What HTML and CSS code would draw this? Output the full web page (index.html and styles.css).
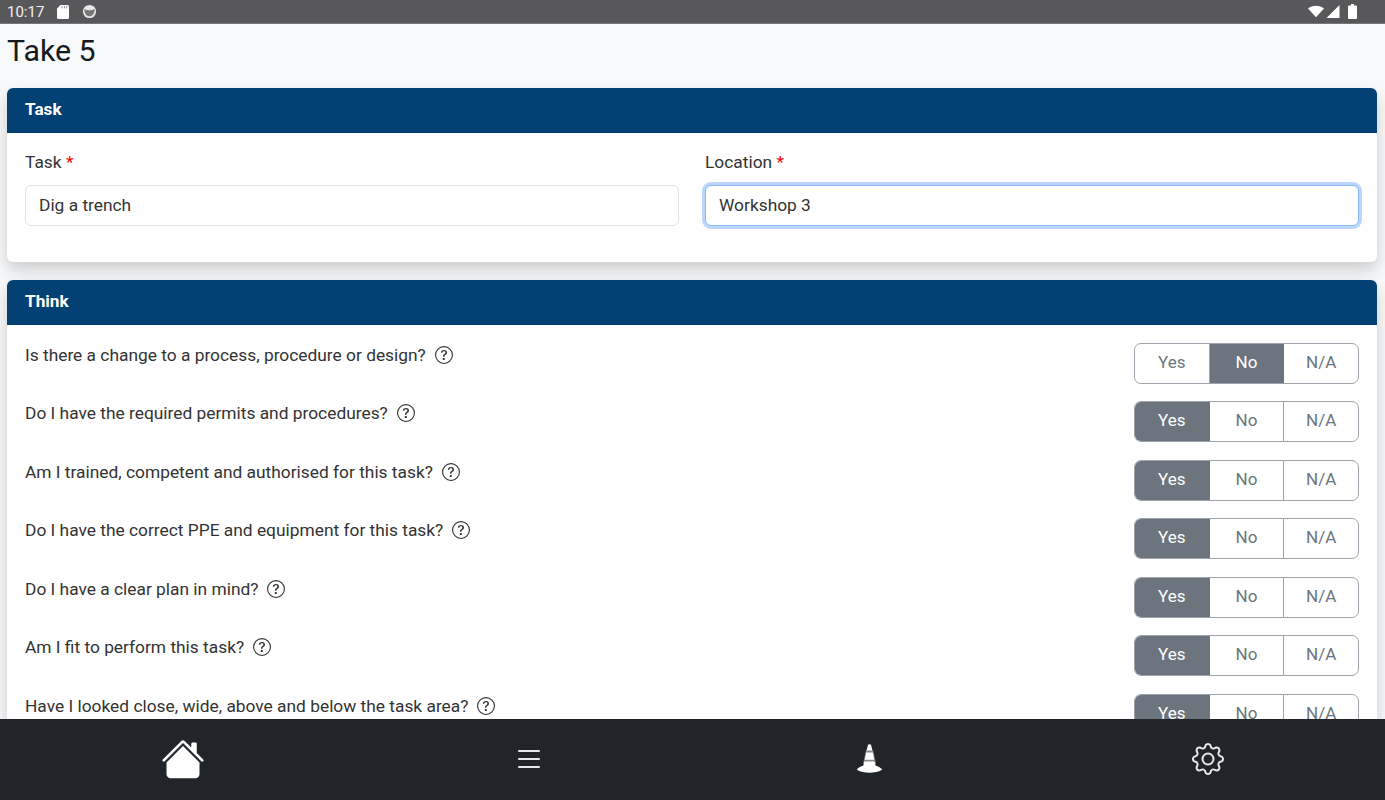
FILE: index.html
```html
<!DOCTYPE html>
<html lang="en">

<head>
  <meta charset="UTF-8">
  <meta name="viewport" content="width=device-width, initial-scale=1.0">
  <title>Take 5</title>
  <link rel="stylesheet" href="styles.css">
</head>

<body>
  <svg class="icon-defs" width="0" height="0" aria-hidden="true">
    <symbol id="help" viewBox="0 0 16 16">
      <path d="M8 15A7 7 0 1 1 8 1a7 7 0 0 1 0 14zm0 1A8 8 0 1 0 8 0a8 8 0 0 0 0 16z"/>
      <path d="M5.255 5.786a.237.237 0 0 0 .241.247h.825c.138 0 .248-.113.266-.25.09-.656.54-1.134 1.342-1.134.686 0 1.314.343 1.314 1.168 0 .635-.374.927-.965 1.371-.673.489-1.206 1.06-1.168 1.987l.003.217a.25.25 0 0 0 .25.246h.811a.25.25 0 0 0 .25-.25v-.105c0-.718.273-.927 1.01-1.486.609-.463 1.244-.977 1.244-2.056 0-1.511-1.276-2.241-2.673-2.241-1.267 0-2.655.59-2.75 2.286zm1.557 5.763c0 .533.425.927 1.01.927.609 0 1.028-.394 1.028-.927 0-.552-.42-.94-1.029-.94-.584 0-1.009.388-1.009.94z"/>
    </symbol>
  </svg>

  <div class="status-bar">
    <div class="status-left">
      <span class="clock">10:17</span>
      <svg class="status-sd" viewBox="0 0 12 14" fill="#fff"><path d="M3.5 0H10.5A1.5 1.5 0 0 1 12 1.5V12.5A1.5 1.5 0 0 1 10.5 14H1.5A1.5 1.5 0 0 1 0 12.5V3.5Z"/><path d="M5 1V3.4M7.4 1V3.4M9.8 1V3.4" stroke="#8a8a8c" stroke-width="1"/></svg>
      <svg class="status-dot" viewBox="0 0 16 16"><circle cx="8" cy="8" r="7" fill="#e8e8e8"/><path d="M2.6 5.2C5 7 11 7 13.4 5.2C13.8 10 11 13 8 13C5 13 2.2 10 2.6 5.2Z" fill="#77777a"/></svg>
    </div>
    <div class="status-right">
      <svg class="status-wifi" viewBox="0 0 18 13" fill="#fff"><path d="M0 3.2C5 -1 13 -1 18 3.2L9 13Z"/></svg>
      <svg class="status-signal" viewBox="0 0 13 13" fill="#fff"><path d="M13 0V13H0Z"/></svg>
      <svg class="status-battery" viewBox="0 0 9 15" fill="#fff"><path d="M3 0H6V1.5H8A1 1 0 0 1 9 2.5V14A1 1 0 0 1 8 15H1A1 1 0 0 1 0 14V2.5A1 1 0 0 1 1 1.5H3Z"/></svg>
    </div>
  </div>

  <main class="content">
    <h1 class="page-title">Take 5</h1>

    <section class="card">
      <h2 class="card-header">Task</h2>
      <div class="card-body task-fields">
        <div class="field">
          <label class="field-label">Task <span class="required">*</span></label>
          <input class="field-input" type="text" value="Dig a trench">
        </div>
        <div class="field">
          <label class="field-label">Location <span class="required">*</span></label>
          <input class="field-input focused" type="text" value="Workshop 3">
        </div>
      </div>
    </section>

    <section class="card">
      <h2 class="card-header">Think</h2>
      <div class="card-body question-list">
        <div class="question">
          <div class="question-text">Is there a change to a process, procedure or design? <svg class="help-icon"><use href="#help"/></svg></div>
          <div class="btn-group"><span class="btn">Yes</span><span class="btn active">No</span><span class="btn">N/A</span></div>
        </div>
        <div class="question">
          <div class="question-text">Do I have the required permits and procedures? <svg class="help-icon"><use href="#help"/></svg></div>
          <div class="btn-group"><span class="btn active">Yes</span><span class="btn">No</span><span class="btn">N/A</span></div>
        </div>
        <div class="question">
          <div class="question-text">Am I trained, competent and authorised for this task? <svg class="help-icon"><use href="#help"/></svg></div>
          <div class="btn-group"><span class="btn active">Yes</span><span class="btn">No</span><span class="btn">N/A</span></div>
        </div>
        <div class="question">
          <div class="question-text">Do I have the correct PPE and equipment for this task? <svg class="help-icon"><use href="#help"/></svg></div>
          <div class="btn-group"><span class="btn active">Yes</span><span class="btn">No</span><span class="btn">N/A</span></div>
        </div>
        <div class="question">
          <div class="question-text">Do I have a clear plan in mind? <svg class="help-icon"><use href="#help"/></svg></div>
          <div class="btn-group"><span class="btn active">Yes</span><span class="btn">No</span><span class="btn">N/A</span></div>
        </div>
        <div class="question">
          <div class="question-text">Am I fit to perform this task? <svg class="help-icon"><use href="#help"/></svg></div>
          <div class="btn-group"><span class="btn active">Yes</span><span class="btn">No</span><span class="btn">N/A</span></div>
        </div>
        <div class="question">
          <div class="question-text">Have I looked close, wide, above and below the task area? <svg class="help-icon"><use href="#help"/></svg></div>
          <div class="btn-group"><span class="btn active">Yes</span><span class="btn">No</span><span class="btn">N/A</span></div>
        </div>
      </div>
    </section>
  </main>

  <nav class="bottom-nav">
    <a class="nav-item">
      <svg class="nav-home" viewBox="0 0 16 16" fill="#fff">
        <path d="M8.707 1.5a1 1 0 0 0-1.414 0L.646 8.146a.5.5 0 0 0 .708.708L8 2.207l6.646 6.647a.5.5 0 0 0 .708-.708L13 5.793V2.5a.5.5 0 0 0-.5-.5h-1a.5.5 0 0 0-.5.5v1.293L8.707 1.5Z"/>
        <path d="m8 3.293 6 6V13.5a1.5 1.5 0 0 1-1.5 1.5h-9A1.5 1.5 0 0 1 2 13.5V9.293l6-6Z"/>
      </svg>
    </a>
    <a class="nav-item">
      <svg class="nav-icon" viewBox="0 0 16 16" fill="#e8e8e8">
        <path d="M2.5 12a.5.5 0 0 1 .5-.5h10a.5.5 0 0 1 0 1H3a.5.5 0 0 1-.5-.5zm0-4a.5.5 0 0 1 .5-.5h10a.5.5 0 0 1 0 1H3a.5.5 0 0 1-.5-.5zm0-4a.5.5 0 0 1 .5-.5h10a.5.5 0 0 1 0 1H3a.5.5 0 0 1-.5-.5z"/>
      </svg>
    </a>
    <a class="nav-item">
      <svg class="nav-cone" viewBox="0 0 25 29">
        <path d="M8.5 8L9.2 6H15.8L16.5 8L19 20H6Z" fill="#8a8b8d"/>
        <path fill="#fff" d="M11 .8C11.6 0 13.4 0 14 .8L15.4 6.6H9.6Z"/>
        <path fill="#fff" d="M9.2 8.4H15.8L17.2 15.8H7.8Z"/>
        <path fill="#fff" d="M7.4 17.6H17.6L18.6 21.4C21 22.4 23.6 23.6 24.6 24.8C25.2 25.4 24.8 26 24.2 26.3C19.5 29.6 5.5 29.6 .8 26.3C.2 26 -.2 25.4 .4 24.8C1.4 23.6 4 22.4 6.4 21.4Z"/>
      </svg>
    </a>
    <a class="nav-item">
      <svg class="nav-icon" viewBox="0 0 16 16" fill="#e8e8e8">
        <path d="M8 4.754a3.246 3.246 0 1 0 0 6.492 3.246 3.246 0 0 0 0-6.492zM5.754 8a2.246 2.246 0 1 1 4.492 0 2.246 2.246 0 0 1-4.492 0z"/>
        <path d="M9.796 1.343c-.527-1.79-3.065-1.79-3.592 0l-.094.319a.873.873 0 0 1-1.255.52l-.292-.16c-1.64-.892-3.433.902-2.54 2.541l.159.292a.873.873 0 0 1-.52 1.255l-.319.094c-1.79.527-1.79 3.065 0 3.592l.319.094a.873.873 0 0 1 .52 1.255l-.16.292c-.892 1.64.901 3.434 2.541 2.54l.292-.159a.873.873 0 0 1 1.255.52l.094.319c.527 1.79 3.065 1.79 3.592 0l.094-.319a.873.873 0 0 1 1.255-.52l.292.16c1.64.893 3.434-.902 2.54-2.541l-.159-.292a.873.873 0 0 1 .52-1.255l.319-.094c1.79-.527 1.79-3.065 0-3.592l-.319-.094a.873.873 0 0 1-.52-1.255l.16-.292c.893-1.64-.902-3.433-2.541-2.54l-.292.159a.873.873 0 0 1-1.255-.52l-.094-.319zm-2.633.283c.246-.835 1.428-.835 1.674 0l.094.319a1.873 1.873 0 0 0 2.693 1.115l.291-.16c.764-.415 1.6.42 1.184 1.185l-.159.292a1.873 1.873 0 0 0 1.116 2.692l.318.094c.835.246.835 1.428 0 1.674l-.319.094a1.873 1.873 0 0 0-1.115 2.693l.16.291c.415.764-.42 1.6-1.185 1.184l-.291-.159a1.873 1.873 0 0 0-2.693 1.116l-.094.318c-.246.835-1.428.835-1.674 0l-.094-.319a1.873 1.873 0 0 0-2.692-1.115l-.292.16c-.764.415-1.6-.42-1.184-1.185l.159-.291A1.873 1.873 0 0 0 1.945 8.93l-.319-.094c-.835-.246-.835-1.428 0-1.674l.319-.094A1.873 1.873 0 0 0 3.06 4.377l-.16-.292c-.415-.764.42-1.6 1.185-1.184l.292.159a1.873 1.873 0 0 0 2.692-1.115l.094-.319z"/>
      </svg>
    </a>
  </nav>
</body>

</html>
```

FILE: styles.css
```css
* {
  margin: 0;
  padding: 0;
  box-sizing: border-box;
  font-family: Roboto, "Liberation Sans", sans-serif;
}

body {
  display: flex;
  flex-direction: column;
  height: 800px;
  overflow: hidden;
  background: #f8f9fa;
  color: #212529;
  font-size: 17.35px;
}

.icon-defs {
  display: block;
  height: 0;
}

.status-bar {
  flex: 0 0 24px;
  display: flex;
  justify-content: space-between;
  align-items: center;
  padding: 0 28px 0 7px;
  background: #58585a;
  border-bottom: 1px solid #77777a;
}

.status-left,
.status-right {
  display: flex;
  align-items: center;
}

.clock {
  color: #f0f0f0;
  font-size: 15px;
  margin-right: 13px;
}

.status-sd {
  width: 12px;
  height: 14px;
  margin-right: 13px;
}

.status-dot {
  width: 15px;
  height: 15px;
}

.status-wifi {
  width: 16px;
  height: 13px;
  margin-right: 2px;
}

.status-signal {
  width: 14px;
  height: 13px;
  margin-right: 8px;
}

.status-battery {
  width: 9px;
  height: 15px;
}

.content {
  flex: 1;
  overflow: hidden;
  padding: 0 8px 0 7px;
}

.page-title {
  color: #16191c;
  font-size: 30.3px;
  font-weight: 400;
  line-height: 36px;
  padding-top: 9px;
  margin-bottom: 19px;
}

.card {
  background: #fff;
  border-radius: 6px;
  box-shadow: 0 8px 16px rgba(0, 0, 0, 0.18);
  margin-bottom: 18px;
  overflow: hidden;
}

.card-header {
  height: 45px;
  padding: 0 18px;
  background: #034073;
  color: #fff;
  font-size: 17.2px;
  font-weight: 700;
  line-height: 43px;
}

.card-body {
  padding: 18px;
}

.task-fields {
  display: flex;
  gap: 26px;
  height: 129px;
}

.field {
  flex: 1;
}

.field-label {
  display: block;
  height: 34px;
  line-height: 23px;
  color: #333;
}

.required {
  color: #f00;
}

.field-input {
  display: block;
  width: 100%;
  height: 41px;
  padding: 0 13px 2px;
  border: 1px solid #dee2e6;
  border-radius: 6px;
  background: #fff;
  color: #333;
  font-size: 17.35px;
  outline: none;
}

.field-input.focused {
  border-color: #8bb9f5;
  box-shadow: 0 0 0 3px #bcd6fb;
}

.question-list {
  display: flex;
  flex-direction: column;
  gap: 17.45px;
}

.question {
  display: flex;
  justify-content: space-between;
  align-items: flex-start;
}

.question-text {
  display: flex;
  align-items: center;
  gap: 9px;
  line-height: 24px;
  color: #333;
}

.help-icon {
  width: 18px;
  height: 18px;
  fill: #333;
}

.btn-group {
  display: flex;
  width: 225px;
  height: 41px;
  border: 1px solid #9da4ab;
  border-radius: 7px;
  overflow: hidden;
  background: #fff;
}

.btn {
  flex: 1;
  font-size: 17px;
  text-align: center;
  line-height: 37px;
  color: #6c757d;
  border-right: 1px solid #9da4ab;
}

.btn:last-child {
  border-right: none;
}

.btn.active {
  background: #6c757d;
  border-right-color: #6c757d;
  color: #fff;
}

.bottom-nav {
  flex: 0 0 81px;
  display: grid;
  grid-template-columns: 342px 350px 330px 348px;
  align-items: center;
  padding: 0 0 2px 12px;
  background: #212529;
}

.nav-item {
  display: flex;
  justify-content: center;
  align-items: center;
}

.nav-home {
  width: 44px;
  height: 44px;
}

.nav-icon {
  width: 32px;
  height: 32px;
}

.nav-cone {
  width: 25px;
  height: 29px;
}
```
